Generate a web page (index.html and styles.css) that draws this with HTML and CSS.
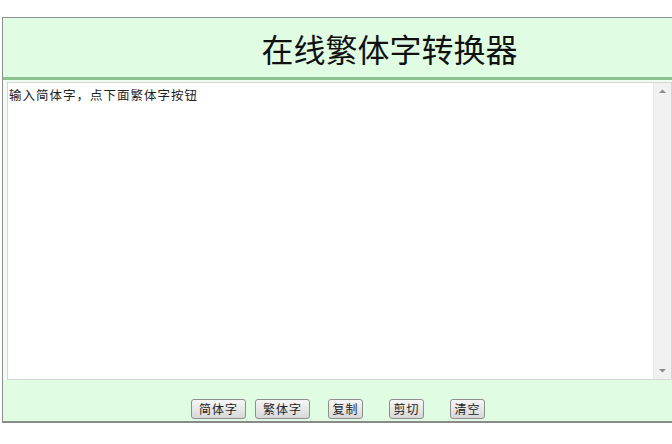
FILE: index.html
```html
<!DOCTYPE html>
<html lang="zh">
<head>
<meta charset="utf-8">
<title>在线繁体字转换器</title>
<link rel="stylesheet" href="styles.css">
</head>
<body>
<div class="box">
  <div class="header"><h1 class="title">在线繁体字转换器</h1></div>
  <div class="body">
    <div class="editor">
      <textarea class="input">输入简体字，点下面繁体字按钮</textarea>
      <div class="scrollbar">
        <svg class="arrow" width="17" height="17" viewBox="0 0 17 17"><path d="M5 10 L8.5 6.5 L12 10 Z" fill="#8c8c8c"/></svg>
        <svg class="arrow" width="17" height="17" viewBox="0 0 17 17"><path d="M5 7 L8.5 10.5 L12 7 Z" fill="#8c8c8c"/></svg>
      </div>
    </div>
  </div>
  <div class="footer">
    <button class="btn btn-wide">简体字</button>
    <button class="btn btn-wide gap1">繁体字</button>
    <button class="btn gap2">复制</button>
    <button class="btn gap3">剪切</button>
    <button class="btn gap3">清空</button>
  </div>
</div>
</body>
</html>
```
FILE: styles.css
```css
html, body { margin: 0; padding: 0; overflow: hidden; background: #fff; }
body { font-family: "Noto Sans CJK SC", "Liberation Sans", sans-serif; }
.box {
  margin: 17px 0 0 2px;
  width: 670px;
  border: 1px solid #8f8f8f;
  border-right: none;
  border-bottom: 2px solid #8a8a8a;
  background: #e0fde4;
  box-sizing: border-box;
}
.header {
  height: 59px;
  border-bottom: 3px solid #8cc48f;
  display: flex;
  align-items: center;
  justify-content: center;
  padding-left: 104px;
}
.title {
  margin: 0;
  font-family: "Noto Sans CJK SC", serif;
  font-weight: 400;
  font-size: 32px;
  line-height: 40px;
  color: #111;
  padding-top: 1px;
}
.body {
  padding: 2px 0 0 4px;
  background: #f2fbf3;
  display: flex;
}
.editor {
  display: flex;
  width: 665px;
  height: 298px;
  box-sizing: border-box;
  border: 1px solid #d6d6d6;
  background: #fff;
}
.input {
  flex: 1;
  display: block;
  margin: 0;
  padding: 4px 1px;
  border: none;
  outline: none;
  background: #fff;
  font-family: "Noto Sans CJK SC", sans-serif;
  font-size: 12.5px;
  letter-spacing: 1px;
  line-height: 15px;
  color: #222;
  resize: none;
  overflow: hidden;
}
.scrollbar {
  width: 17px;
  background: #f1f1f1;
  border-left: 1px solid #e8e8e8;
  display: flex;
  flex-direction: column;
  justify-content: space-between;
}
.arrow { display: block; }
.footer {
  height: 41px;
  display: flex;
  align-items: flex-end;
  padding: 0 0 2px 188px;
  box-sizing: border-box;
}
.btn {
  width: 35px;
  height: 20px;
  padding: 0;
  border: 1px solid #8e8e8e;
  border-radius: 3px;
  background: linear-gradient(#f6f6f6, #d8d8d8);
  font-family: "Noto Sans CJK SC", sans-serif;
  font-size: 12px;
  letter-spacing: 1px;
  line-height: 18px;
  color: #222;
  text-align: center;
}
.btn-wide { width: 55px; }
.gap1 { margin-left: 9px; }
.gap2 { margin-left: 18px; }
.gap3 { margin-left: 26px; }
```
